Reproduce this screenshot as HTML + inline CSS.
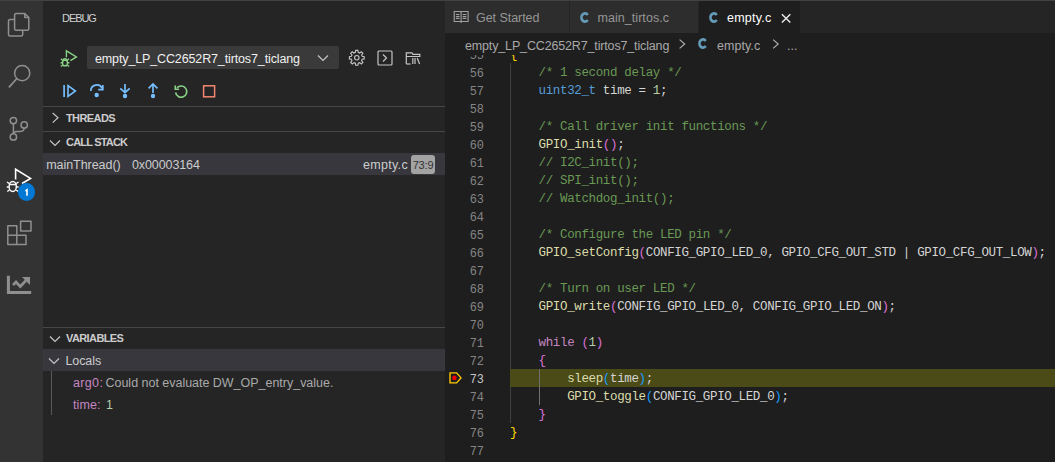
<!DOCTYPE html>
<html><head><meta charset="utf-8">
<style>
*{box-sizing:border-box;margin:0;padding:0}
html,body{width:1055px;height:462px;overflow:hidden;background:#1e1e1e}
body{position:relative;font-family:"Liberation Sans",sans-serif;color:#cccccc}
.a{position:absolute}
.ui{font-family:"Liberation Sans",sans-serif;white-space:pre;line-height:1}
#act{left:0;top:0;width:43px;height:462px;background:#333333}
#side{left:43px;top:0;width:402px;height:462px;background:#252526}
#topline{left:0;top:0;width:1055px;height:1px;background:#424242;z-index:50}
#tabbar{left:445px;top:0;width:610px;height:33px;background:#252526}
.tab{top:0;height:33px;background:#2d2d2d}
.sep{left:43px;width:402px;height:1px;background:#464646}
.hdr{font-weight:bold;font-size:11px;color:#cccccc}
.code{font-family:"Liberation Mono",monospace;font-size:12.5px;letter-spacing:-0.359px;white-space:pre;line-height:18px;height:18px;padding-top:1px}
.ln{font-family:"Liberation Mono",monospace;font-size:11.9px;letter-spacing:0px;white-space:pre;line-height:18px;height:18px;color:#858585;text-align:right;width:60px;left:-21px;padding-top:1.6px}
.cm{color:#6a9955}.kw{color:#569cd6}.fn{color:#dcdcaa}.tx{color:#d4d4d4}.nu{color:#b5cea8}.ctl{color:#c586c0}
.b1{color:#ffd700}.b2{color:#da70d6}.b3{color:#179fff}
</style></head><body>
<div id="topline" class="a"></div>
<div id="act" class="a">
  <!-- explorer -->
  <svg class="a" style="left:0;top:0" width="43" height="300" viewBox="0 0 43 300" fill="none" stroke="#8f8f8f" stroke-width="1.5" stroke-linejoin="round">
    <path d="M14.6 15 Q14.6 13.5 16.1 13.5 H24.8 L28.8 17.5 V28.8 Q28.8 30.3 27.3 30.3 H16.1 Q14.6 30.3 14.6 28.8 Z"/>
    <path d="M24.8 13.5 V17.5 H28.8"/>
    <path d="M14.6 19.6 H10 Q8.5 19.6 8.5 21.1 V34.4 Q8.5 35.9 10 35.9 H21.2 Q22.7 35.9 22.7 34.4 V30.3"/>
    <!-- search -->
    <circle cx="22.2" cy="73.2" r="7.6"/>
    <path d="M16.9 78.5 L8.9 87.4" stroke-width="1.8"/>
    <!-- scm -->
    <circle cx="13.4" cy="120.6" r="3.2"/>
    <circle cx="13.4" cy="136.9" r="3.2"/>
    <circle cx="24.2" cy="124.9" r="3.2"/>
    <path d="M13.4 123.8 V133.7"/>
    <path d="M24.2 128.1 Q24.2 131.4 20.5 131.4 H17 Q13.4 131.4 13.4 134"/>
    <!-- extensions -->
    <path d="M7.8 225.8 H16.8 V235.2 H26 V244.5 H7.8 Z M7.8 235.2 H16.8 V244.5"/>
    <rect x="20.6" y="221.3" width="10.4" height="9.8"/>
  </svg>
  <!-- chart -->
  <svg class="a" style="left:0;top:265px" width="43" height="40" viewBox="0 0 43 40">
    <path d="M8.4 10.8 V27.5 H31.2" fill="none" stroke="#8f8f8f" stroke-width="3"/>
    <path d="M13 20 L16 17 L20.3 21.4 L26 15.6" fill="none" stroke="#8f8f8f" stroke-width="2.8"/>
    <path d="M22 12 H30 V20 Z" fill="#8f8f8f"/>
  </svg>
  <!-- debug active -->
  <svg class="a" style="left:0;top:160px" width="43" height="40" viewBox="0 0 43 40" fill="none" stroke="#ffffff" stroke-width="1.4">
    <path d="M15.6 19.5 V9.2 L30.5 18.4 L22 23.5" stroke-width="1.6"/>
    <ellipse cx="12.7" cy="26.5" rx="3.6" ry="5"/>
    <path d="M9 24.5 H16.5 M7 22 L9.2 23.5 M18.5 22 L16.3 23.5 M6.8 27 H8.8 M16.6 27 H18.6 M7.3 31.5 L9.4 30 M18.2 31.5 L16.1 30"/>
  </svg>
  <div class="a" style="left:17.8px;top:183.4px;width:17.4px;height:17.4px;border-radius:50%;background:#0078d4"></div>
  <svg class="a" style="left:18px;top:183.6px" width="17" height="17" viewBox="0 0 17 17"><path d="M7.4 6.9 L9 5.8 V11.8" fill="none" stroke="#fff" stroke-width="1.6"/></svg>
</div>

<div id="side" class="a"></div>
<div class="a ui" style="left:62px;top:13px;font-size:11px;letter-spacing:-1.05px;color:#d0d0d0">DEBUG</div>

<!-- debug start icon -->
<svg class="a" style="left:55px;top:45px" width="30" height="25" viewBox="0 0 30 25" fill="none" stroke="#89d185" stroke-width="1.4">
  <path d="M11.4 12.2 V5.8 L21.4 11.9 L15.4 15.6"/>
  <path d="M8.2 15.2 A1.8 1.6 0 0 1 11.8 15.2"/>
  <ellipse cx="10" cy="17.9" rx="2.5" ry="2.9"/>
  <path d="M7.3 15.4 H12.7 M5.9 13.9 L7.5 15 M14.1 13.9 L12.5 15 M5.6 17.8 H7.4 M12.6 17.8 H14.4 M5.9 21.4 L7.6 20.2 M14.1 21.4 L12.4 20.2"/>
</svg>
<!-- dropdown -->
<div class="a" style="left:87px;top:46px;width:252px;height:23px;background:#3a3a3a;border-radius:2px"></div>
<div class="a ui" style="left:95px;top:53px;font-size:12.5px;letter-spacing:-0.13px;color:#f0f0f0">empty_LP_CC2652R7_tirtos7_ticlang</div>
<svg class="a" style="left:316px;top:53px" width="14" height="10" viewBox="0 0 14 10" fill="none" stroke="#c5c5c5" stroke-width="1.2"><path d="M2 2.5 L7 7.5 L12 2.5"/></svg>
<!-- gear -->
<svg class="a" style="left:347px;top:48px" width="20" height="20" viewBox="0 0 20 20" fill="none" stroke="#c5c5c5" stroke-width="1.3">
  <g transform="translate(9.8 9.8) scale(0.86) translate(-9.9 -10.5)">
  <path d="M8.6 1.8 H11.2 L11.6 4.2 L13.2 4.9 L15.2 3.4 L17 5.2 L15.5 7.2 L16.2 8.8 L18.5 9.2 V11.8 L16.2 12.2 L15.5 13.8 L17 15.8 L15.2 17.6 L13.2 16.1 L11.6 16.8 L11.2 19.1 H8.6 L8.2 16.8 L6.6 16.1 L4.6 17.6 L2.8 15.8 L4.3 13.8 L3.6 12.2 L1.3 11.8 V9.2 L3.6 8.8 L4.3 7.2 L2.8 5.2 L4.6 3.4 L6.6 4.9 L8.2 4.2 Z"/>
  <circle cx="9.9" cy="10.5" r="2.6"/>
  </g>
</svg>
<!-- terminal -->
<svg class="a" style="left:376px;top:49px" width="18" height="18" viewBox="0 0 18 18" fill="none" stroke="#c5c5c5" stroke-width="1.2">
  <rect x="2" y="2" width="14" height="14" rx="1"/>
  <path d="M7 5.5 L10.5 9 L7 12.5"/>
</svg>
<!-- folder-ish -->
<svg class="a" style="left:404px;top:50px" width="18" height="16" viewBox="0 0 18 16" fill="none" stroke="#c5c5c5" stroke-width="1.2">
  <path d="M2.3 14 V2.8 H8 L9 4.3 H15.8 V6.5 H2.3"/>
  <path d="M2.3 14 H6.5"/>
  <path d="M8.8 8 V14 M11 8 V14 M13.2 8 L15.6 14"/>
</svg>

<!-- toolbar -->
<svg class="a" style="left:55px;top:75px" width="175" height="30" viewBox="0 0 175 30">
  <g fill="none" stroke="#75beff" stroke-width="1.7">
    <path d="M9.1 10 V22.1"/>
    <path d="M13 10.6 L20.4 16 L13 21.4 Z" stroke-width="1.6"/>
    <path d="M35.8 16 A6 6 0 0 1 47.2 13.4"/>
    <path d="M47.8 10.1 V14.7 H43.2"/>
    <path d="M70 8.9 V17.2 M65.3 13.3 L70 17.7 L74.7 13.3"/>
    <path d="M98 18 V9.6 M93.6 13.3 L98 9 L102.4 13.3"/>
  </g>
  <g fill="#75beff">
    <circle cx="41.7" cy="20" r="2.2"/>
    <circle cx="70" cy="21" r="2.2"/>
    <circle cx="98" cy="21" r="2.2"/>
  </g>
  <g fill="none" stroke="#89d185" stroke-width="1.6">
    <path d="M122 12.8 A5.6 5.6 0 1 1 120.6 17.5"/>
    <path d="M120.3 10.5 V14.3 H124.1"/>
  </g>
  <rect x="148.6" y="10.8" width="11" height="11" fill="none" stroke="#f48771" stroke-width="1.5"/>
</svg>

<div class="a sep" style="top:106px"></div>
<svg class="a" style="left:48px;top:112px" width="14" height="12" viewBox="0 0 14 12" fill="none" stroke="#c5c5c5" stroke-width="1.2"><path d="M4.7 1 L10 5.8 L4.7 10.6"/></svg>
<div class="a ui hdr" style="left:66px;top:113px;letter-spacing:-0.6px">THREADS</div>
<div class="a sep" style="top:131px"></div>
<svg class="a" style="left:48px;top:137px" width="14" height="12" viewBox="0 0 14 12" fill="none" stroke="#c5c5c5" stroke-width="1.2"><path d="M2 3.5 L7 8.5 L12 3.5"/></svg>
<div class="a ui hdr" style="left:66px;top:137px;letter-spacing:-0.8px">CALL STACK</div>

<!-- callstack row -->
<div class="a" style="left:43px;top:153px;width:402px;height:22px;background:#37373d"></div>
<div class="a ui" style="left:46.2px;top:159px;font-size:12.5px;letter-spacing:-0.05px;color:#cccccc">mainThread()</div>
<div class="a ui" style="left:132px;top:159px;font-size:12.5px;letter-spacing:-0.1px;color:#cccccc">0x00003164</div>
<div class="a ui" style="left:363px;top:159px;font-size:12.5px;letter-spacing:0.3px;color:#cccccc">empty.c</div>
<div class="a" style="left:411px;top:155px;width:24px;height:19px;background:#a3a3a3;border-radius:3px"></div>
<div class="a ui" style="left:411px;top:159.5px;width:24px;text-align:center;font-size:11px;letter-spacing:-0.2px;color:#333333">73:9</div>

<div class="a sep" style="top:327px"></div>
<svg class="a" style="left:48px;top:332.5px" width="14" height="12" viewBox="0 0 14 12" fill="none" stroke="#c5c5c5" stroke-width="1.2"><path d="M2 3.5 L7 8.5 L12 3.5"/></svg>
<div class="a ui hdr" style="left:66px;top:333px;letter-spacing:-0.6px">VARIABLES</div>
<div class="a" style="left:43px;top:349px;width:402px;height:22px;background:#37373d"></div>
<svg class="a" style="left:47px;top:354.5px" width="14" height="12" viewBox="0 0 14 12" fill="none" stroke="#c5c5c5" stroke-width="1.2"><path d="M2 3.5 L7 8.5 L12 3.5"/></svg>
<div class="a ui" style="left:65.5px;top:355px;font-size:12.5px;letter-spacing:-0.1px;color:#cccccc">Locals</div>
<div class="a" style="left:51px;top:371px;width:1px;height:44px;background:#585858"></div>
<div class="a ui" style="left:73px;top:377px;font-size:12.5px;letter-spacing:0.35px;color:#c586c0">arg0:</div>
<div class="a ui" style="left:105.5px;top:377px;font-size:12.5px;letter-spacing:-0.02px;color:#a9a9a9">Could not evaluate DW_OP_entry_value.</div>
<div class="a ui" style="left:73px;top:399px;font-size:12.5px;letter-spacing:0.1px;color:#c586c0">time:</div>
<div class="a ui" style="left:106px;top:399px;font-size:12.5px;color:#b5cea8">1</div>

<!-- tabs -->
<div id="tabbar" class="a"></div>
<div class="a tab" style="left:445px;width:124px"></div>
<div class="a tab" style="left:570px;width:128px"></div>
<div class="a tab" style="left:699px;width:101px;background:#1e1e1e"></div>
<svg class="a" style="left:448px;top:5px" width="26" height="20" viewBox="0 0 26 20" fill="none" stroke="#a0a0a0" stroke-width="1.1">
  <path d="M6.2 6.5 H12.5 L13.1 7.1 L13.7 6.5 H20.1 V16.5 H13.7 L13.1 17.3 L12.5 16.5 H6.2 Z M13.1 7.1 V16.8"/>
  <path d="M7.9 9.5 H11.5 M7.9 11.5 H11.5 M7.9 13.4 H11.5 M14.7 9.5 H18.4 M14.7 11.5 H18.4 M14.7 13.4 H18.4"/>
</svg>
<div class="a ui" style="left:476px;top:12px;font-size:12.5px;letter-spacing:-0.05px;color:#969696">Get Started</div>
<svg class="a" style="left:578.6px;top:12px" width="12" height="12" viewBox="0 0 12 12"><path d="M8.7 2.9 A3.5 4.1 0 1 0 8.7 8.1" fill="none" stroke="#649bb8" stroke-width="2.7" transform="scale(1.0)"/></svg>
<div class="a ui" style="left:597.5px;top:12px;font-size:12.5px;letter-spacing:0.05px;color:#969696">main_tirtos.c</div>
<svg class="a" style="left:708.4px;top:12px" width="12" height="12" viewBox="0 0 12 12"><path d="M8.7 2.9 A3.5 4.1 0 1 0 8.7 8.1" fill="none" stroke="#649bb8" stroke-width="2.7" transform="scale(1.0)"/></svg>
<div class="a ui" style="left:727px;top:12px;font-size:12.5px;letter-spacing:0.22px;color:#ffffff">empty.c</div>
<svg class="a" style="left:779px;top:12px" width="14" height="12" viewBox="0 0 14 12" fill="none" stroke="#e8e8e8" stroke-width="1.45"><path d="M2.9 2.2 L11.3 10.6 M11.3 2.2 L2.9 10.6"/></svg>

<!-- breadcrumbs -->
<div class="a ui" style="left:465px;top:40px;font-size:12.5px;letter-spacing:-0.15px;color:#a9a9a9">empty_LP_CC2652R7_tirtos7_ticlang</div>
<svg class="a" style="left:676px;top:39px" width="12" height="14" viewBox="0 0 12 14" fill="none" stroke="#b0b0b0" stroke-width="1.15"><path d="M3.6 0.6 L8.7 5 L3.6 9.4"/></svg>
<svg class="a" style="left:696.9px;top:38.2px" width="12" height="12" viewBox="0 0 12 12"><path d="M8.7 2.9 A3.5 4.1 0 1 0 8.7 8.1" fill="none" stroke="#649bb8" stroke-width="2.7"/></svg>
<div class="a ui" style="left:717px;top:40px;font-size:12.5px;letter-spacing:0.05px;color:#a9a9a9">empty.c</div>
<svg class="a" style="left:769px;top:39px" width="12" height="14" viewBox="0 0 12 14" fill="none" stroke="#b0b0b0" stroke-width="1.15"><path d="M4.1 0.6 L9.2 5 L4.1 9.4"/></svg>
<div class="a ui" style="left:787px;top:40px;font-size:12.5px;color:#a9a9a9">...</div>

<!-- code area -->
<div class="a" style="left:445px;top:55px;width:610px;height:407px;overflow:hidden">
  <div class="a" style="left:0;top:-10px;width:610px">
    <!-- indent guides -->
    <div class="a" style="left:65px;top:18px;width:1px;height:360px;background:#404040"></div>
    <!-- highlight line 73 -->
    <div class="a" style="left:65px;top:324px;width:545px;height:18px;background:#4b4b18"></div>
    <div class="a" style="left:94px;top:324px;width:1px;height:36px;background:#707070"></div>
    <!-- current frame glyph -->
    <svg class="a" style="left:2px;top:326px" width="16" height="14" viewBox="0 0 16 14">
      <path d="M3 1.9 H9.6 L14 6.9 L9.6 11.9 H3 Z" fill="none" stroke="#ffcc00" stroke-width="1.35"/>
      <circle cx="7.4" cy="6.9" r="2.3" fill="#f00000"/>
    </svg>
    <div id="lines">
<div class="a ln" style="top:0px;color:#858585">55</div>
<div class="a code" style="left:65px;top:0px"><span class="b1">{</span></div>
<div class="a ln" style="top:18px;color:#858585">56</div>
<div class="a code" style="left:65px;top:18px"><span class="tx">    </span><span class="cm">/* 1 second delay */</span></div>
<div class="a ln" style="top:36px;color:#858585">57</div>
<div class="a code" style="left:65px;top:36px"><span class="tx">    </span><span class="kw">uint32_t</span><span class="tx"> time = </span><span class="nu">1</span><span class="tx">;</span></div>
<div class="a ln" style="top:54px;color:#858585">58</div>
<div class="a ln" style="top:72px;color:#858585">59</div>
<div class="a code" style="left:65px;top:72px"><span class="tx">    </span><span class="cm">/* Call driver init functions */</span></div>
<div class="a ln" style="top:90px;color:#858585">60</div>
<div class="a code" style="left:65px;top:90px"><span class="tx">    </span><span class="fn">GPIO_init</span><span class="b2">()</span><span class="tx">;</span></div>
<div class="a ln" style="top:108px;color:#858585">61</div>
<div class="a code" style="left:65px;top:108px"><span class="tx">    </span><span class="cm">// I2C_init();</span></div>
<div class="a ln" style="top:126px;color:#858585">62</div>
<div class="a code" style="left:65px;top:126px"><span class="tx">    </span><span class="cm">// SPI_init();</span></div>
<div class="a ln" style="top:144px;color:#858585">63</div>
<div class="a code" style="left:65px;top:144px"><span class="tx">    </span><span class="cm">// Watchdog_init();</span></div>
<div class="a ln" style="top:162px;color:#858585">64</div>
<div class="a ln" style="top:180px;color:#858585">65</div>
<div class="a code" style="left:65px;top:180px"><span class="tx">    </span><span class="cm">/* Configure the LED pin */</span></div>
<div class="a ln" style="top:198px;color:#858585">66</div>
<div class="a code" style="left:65px;top:198px"><span class="tx">    </span><span class="fn">GPIO_setConfig</span><span class="b2">(</span><span class="tx">CONFIG_GPIO_LED_0, GPIO_CFG_OUT_STD | GPIO_CFG_OUT_LOW</span><span class="b2">)</span><span class="tx">;</span></div>
<div class="a ln" style="top:216px;color:#858585">67</div>
<div class="a ln" style="top:234px;color:#858585">68</div>
<div class="a code" style="left:65px;top:234px"><span class="tx">    </span><span class="cm">/* Turn on user LED */</span></div>
<div class="a ln" style="top:252px;color:#858585">69</div>
<div class="a code" style="left:65px;top:252px"><span class="tx">    </span><span class="fn">GPIO_write</span><span class="b2">(</span><span class="tx">CONFIG_GPIO_LED_0, CONFIG_GPIO_LED_ON</span><span class="b2">)</span><span class="tx">;</span></div>
<div class="a ln" style="top:270px;color:#858585">70</div>
<div class="a ln" style="top:288px;color:#858585">71</div>
<div class="a code" style="left:65px;top:288px"><span class="tx">    </span><span class="ctl">while</span><span class="tx"> </span><span class="b2">(</span><span class="nu">1</span><span class="b2">)</span></div>
<div class="a ln" style="top:306px;color:#858585">72</div>
<div class="a code" style="left:65px;top:306px"><span class="tx">    </span><span class="b2">{</span></div>
<div class="a ln" style="top:324px;color:#c6c6c6">73</div>
<div class="a code" style="left:65px;top:324px"><span class="tx">        </span><span class="fn">sleep</span><span class="b3">(</span><span class="tx">time</span><span class="b3">)</span><span class="tx">;</span></div>
<div class="a ln" style="top:342px;color:#858585">74</div>
<div class="a code" style="left:65px;top:342px"><span class="tx">        </span><span class="fn">GPIO_toggle</span><span class="b3">(</span><span class="tx">CONFIG_GPIO_LED_0</span><span class="b3">)</span><span class="tx">;</span></div>
<div class="a ln" style="top:360px;color:#858585">75</div>
<div class="a code" style="left:65px;top:360px"><span class="tx">    </span><span class="b2">}</span></div>
<div class="a ln" style="top:378px;color:#858585">76</div>
<div class="a code" style="left:65px;top:378px"><span class="b1">}</span></div>
<div class="a ln" style="top:396px;color:#858585">77</div>
</div>
  </div>
</div>
</body></html>
